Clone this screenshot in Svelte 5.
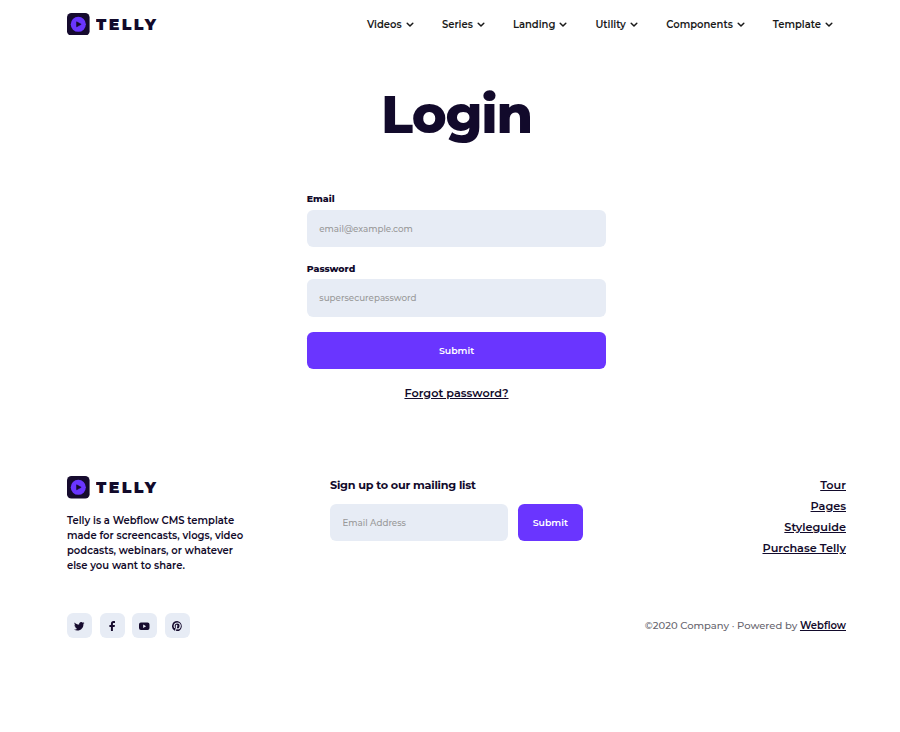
<script>
  const nav = [
    { label: 'Videos', width: 35 },
    { label: 'Series', width: 31 },
    { label: 'Landing', width: 42.5 },
    { label: 'Utility', width: 30.8 },
    { label: 'Components', width: 66.5 },
    { label: 'Template', width: 48.3 },
  ];
  const links = ['Tour', 'Pages', 'Styleguide', 'Purchase Telly'];
  const about = [
    'Telly is a Webflow CMS template',
    'made for screencasts, vlogs, video',
    'podcasts, webinars, or whatever',
    'else you want to share.',
  ];
  const socials = [
    { name: 'Twitter', d: 'M23.95 4.57a10 10 0 0 1-2.82.77 4.96 4.96 0 0 0 2.16-2.72c-.95.55-2 .95-3.13 1.18a4.92 4.92 0 0 0-8.38 4.48C7.69 8.1 4.07 6.13 1.64 3.16a4.82 4.82 0 0 0-.67 2.48c0 1.71.87 3.21 2.19 4.1a4.9 4.9 0 0 1-2.23-.62v.06a4.92 4.92 0 0 0 3.95 4.83 5 5 0 0 1-2.21.08 4.94 4.94 0 0 0 4.6 3.42A9.87 9.87 0 0 1 0 19.54a14 14 0 0 0 7.55 2.21c9.05 0 14-7.5 14-13.98l-.02-.64a9.9 9.9 0 0 0 2.42-2.56z' },
    { name: 'Facebook', d: 'M9 24V13.5H5.5V9H9V6.2C9 2.2 11.3.2 14.8.2c1.6 0 3 .1 3.5.2v4h-2.5c-1.9 0-2.3.9-2.3 2.3V9h4.6l-.7 4.5h-3.9V24z' },
    { name: 'YouTube', d: 'M4.5 3.5h15A4.5 4.5 0 0 1 24 8v8a4.5 4.5 0 0 1-4.5 4.5h-15A4.5 4.5 0 0 1 0 16V8a4.5 4.5 0 0 1 4.5-4.5zM9.5 8v8l6.8-4z' },
    { name: 'Pinterest', d: 'M12 0a12 12 0 0 0-4.7 23c-.1-.9-.1-2.2.1-3.2l1.5-6s-.4-.8-.4-1.9c0-1.8 1-3.1 2.3-3.1 1.1 0 1.6.8 1.6 1.8 0 1.1-.7 2.7-1 4.2-.3 1.3.6 2.3 1.9 2.3 2.3 0 3.9-3 3.9-6.5 0-2.7-1.8-4.7-5.1-4.7-3.7 0-6 2.8-6 5.8 0 1.1.3 1.8.8 2.4.2.3.3.4.2.7l-.3 1c-.1.3-.3.4-.6.3-1.7-.7-2.5-2.6-2.5-4.7 0-3.5 3-7.7 8.8-7.7 4.7 0 7.8 3.4 7.8 7.1 0 4.8-2.7 8.5-6.7 8.5-1.3 0-2.6-.7-3-1.5l-.9 3.4c-.3 1-.8 2-1.3 2.7A12 12 0 1 0 12 0z' },
  ];
</script>

{#snippet logo()}
  <div class="logo">
    <svg class="mark" viewBox="0 0 23 23">
      <rect width="23" height="23" rx="4.5" fill="#160b2e" />
      <circle cx="11.5" cy="11.5" r="7.7" fill="#6a35ff" />
      <path d="M9.8 9v5l4.6-2.5z" fill="#160b2e" stroke="#160b2e" stroke-width=".7" stroke-linejoin="round" />
    </svg>
    <svg class="word" viewBox="0 0 64 23">
      <text x="0" y="16.9" textLength="60" lengthAdjust="spacing">TELLY</text>
    </svg>
  </div>
{/snippet}

<div class="page">
  <header>
    {@render logo()}
    <nav>
      {#each nav as item}
        <a href="#top">
          <span style:width="{item.width}px">{item.label}</span>
          <svg viewBox="0 0 8 6"><path d="M1.2 1.2l2.8 2.8 2.8-2.8" /></svg>
        </a>
      {/each}
    </nav>
  </header>

  <main>
    <h1>Login</h1>
    <form>
      <label for="email">Email</label>
      <input id="email" type="email" placeholder="email@example.com" />
      <label for="password">Password</label>
      <input id="password" type="password" placeholder="supersecurepassword" />
      <button type="button">Submit</button>
      <a class="forgot" href="#top">Forgot password?</a>
    </form>
  </main>

  <footer>
    <div class="top">
      <div class="about">
        {@render logo()}
        <p>{#each about as line}<span>{line}</span>{/each}</p>
      </div>
      <div class="signup">
        <h2>Sign up to our mailing list</h2>
        <div class="row">
          <input type="email" placeholder="Email Address" />
          <button type="button">Submit</button>
        </div>
      </div>
      <div class="links">
        {#each links as link}<a href="#top">{link}</a>{/each}
      </div>
    </div>
    <div class="bottom">
      <div class="socials">
        {#each socials as icon}
          <a href="#top" aria-label={icon.name}>
            <svg viewBox="0 0 24 24"><path fill-rule="evenodd" d={icon.d} /></svg>
          </a>
        {/each}
      </div>
      <div class="copy">©2020 Company · Powered by <a href="#top">Webflow</a></div>
    </div>
  </footer>
</div>

<style>
  :global(body) { background: #fff; }
  .page {
    box-sizing: border-box;
    width: 900px;
    height: 732px;
    padding: 0 54px 0 67px;
    overflow: hidden;
    font-family: Montserrat, Inter, sans-serif;
    color: #120a2b;
  }
  a { color: inherit; }
  svg { display: block; }
  header {
    display: flex;
    align-items: center;
    justify-content: space-between;
    height: 48px;
    padding-right: 13px;
  }
  .logo { display: flex; align-items: center; height: 23px; }
  .mark { width: 22.6px; height: 22.6px; margin-right: 6.4px; }
  .word { width: 64px; height: 23px; }
  .word text {
    font-size: 15.8px;
    font-weight: 900;
    fill: #120a2b;
  }
  nav { display: flex; gap: 28px; }
  nav a {
    display: flex;
    align-items: center;
    gap: 4px;
    color: #1a1a1a;
    font-size: 10px;
    font-weight: 600;
    line-height: 17px;
    text-decoration: none;
    white-space: nowrap;
  }
  nav svg { width: 8px; height: 6px; margin-top: 1px; }
  nav path { fill: none; stroke: #1a1a1a; stroke-width: 1.5; stroke-linecap: round; stroke-linejoin: round; }
  h1 {
    margin: 32px 0 0;
    font-size: 52.5px;
    font-weight: 800;
    line-height: 68px;
    text-align: center;
    letter-spacing: -1.2px;
  }
  form { display: flex; flex-direction: column; width: 299.5px; margin: 43px auto 0; }
  label { font-size: 9.375px; font-weight: 800; line-height: 15px; margin-bottom: 3.8px; }
  input {
    box-sizing: border-box;
    height: 37.5px;
    padding: 0 12.5px;
    border: 0;
    border-radius: 6.25px;
    background: #e7ecf5;
    font: 500 8.75px Montserrat, Inter, sans-serif;
  }
  input::placeholder { color: #999; opacity: 1; }
  form input { margin-bottom: 13.3px; }
  button {
    height: 37.5px;
    padding: 0;
    border: 0;
    border-radius: 6.25px;
    background: #6a35ff;
    color: #fff;
    font: 600 9.375px Montserrat, Inter, sans-serif;
  }
  form button { margin-top: 1.4px; }
  .forgot { align-self: center; margin-top: 14.5px; font-size: 11.25px; font-weight: 600; line-height: 18px; }
  footer { margin-top: 74.2px; }
  .top { display: flex; height: 137.6px; }
  .about { width: 263px; }
  .about p { margin: 14.6px 0 0; font-size: 10px; font-weight: 600; line-height: 15px; }
  .about p span { display: block; white-space: nowrap; }
  .signup { width: 254px; }
  h2 { margin: 0; font-size: 11.25px; font-weight: 700; line-height: 18px; letter-spacing: -.23px; }
  .row { display: flex; gap: 10px; margin-top: 10px; }
  .row input { width: 177.5px; }
  .row button { width: 65.5px; }
  .links { flex: 1; display: flex; flex-direction: column; align-items: flex-end; margin-top: -1px; }
  .links a { font-size: 11.25px; font-weight: 600; line-height: 21.2px; }
  .bottom { display: flex; align-items: center; justify-content: space-between; }
  .socials { display: flex; gap: 7.5px; }
  .socials a {
    display: flex;
    align-items: center;
    justify-content: center;
    width: 25px;
    height: 25px;
    border-radius: 6.25px;
    background: #e7ecf5;
  }
  .socials svg { width: 10.5px; height: 10.5px; fill: #160b2e; }
  .copy { font-size: 10px; font-weight: 500; color: #67656e; }
  .copy a { color: #120a2b; font-weight: 600; }
</style>
